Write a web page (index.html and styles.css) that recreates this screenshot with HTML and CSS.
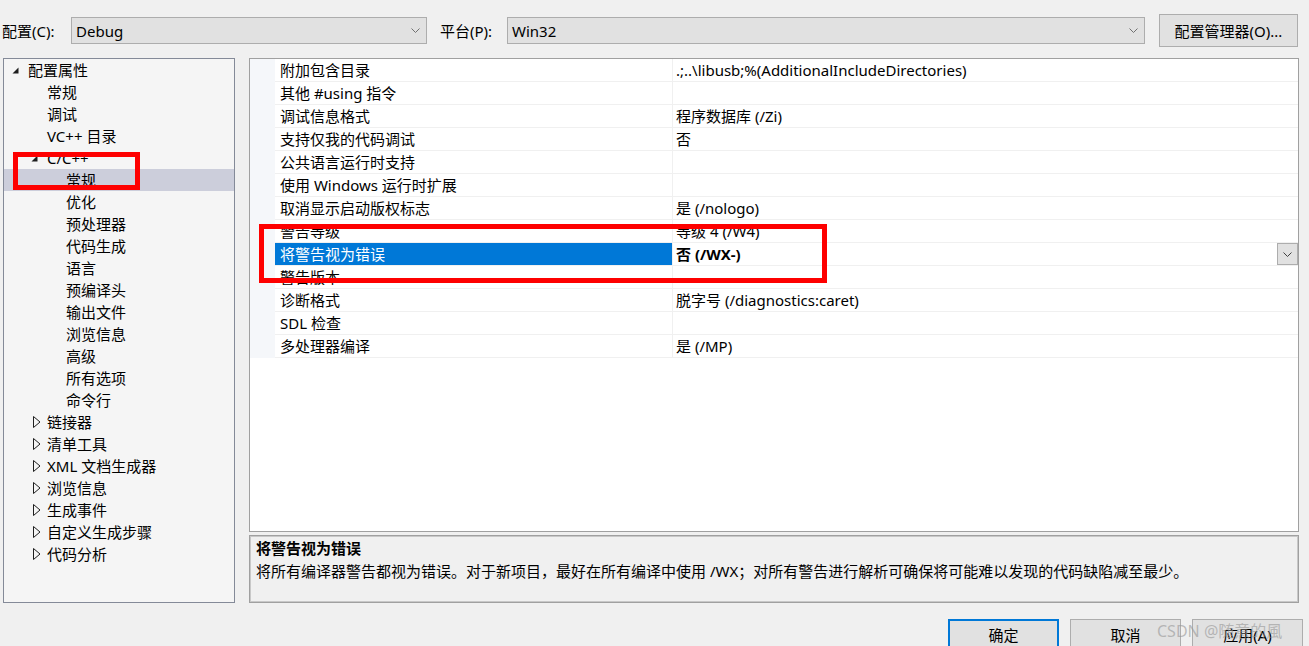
FILE: index.html
```html
<!DOCTYPE html>
<html lang="zh-CN">
<head>
  <meta charset="UTF-8" />
  <title>属性页</title>
  <link rel="stylesheet" href="styles.css">
</head>
<body>
  <div class="toolbar">
    <label class="cfg-label">配置(C):</label>
    <div class="combo combo-cfg">Debug
      <svg width="9" height="5" viewBox="0 0 9 5"><polyline points="0.5,0.5 4.5,4.5 8.5,0.5" fill="none" stroke="#707070"/></svg>
    </div>
    <label class="plat-label">平台(P):</label>
    <div class="combo combo-plat">Win32
      <svg width="9" height="5" viewBox="0 0 9 5"><polyline points="0.5,0.5 4.5,4.5 8.5,0.5" fill="none" stroke="#707070"/></svg>
    </div>
    <button class="btn btn-mgr">配置管理器(O)...</button>
  </div>

  <div class="main">
    <div class="tree">
      <div class="node d0"><span class="twist"><svg width="7" height="7" viewBox="0 0 7 7"><polygon points="6.5,0.5 6.5,6.5 0.5,6.5" fill="#1e1e1e"/></svg></span>配置属性</div>
      <div class="node d1"><span class="twist"></span>常规</div>
      <div class="node d1"><span class="twist"></span>调试</div>
      <div class="node d1"><span class="twist"></span>VC++ 目录</div>
      <div class="node d1"><span class="twist"><svg width="7" height="7" viewBox="0 0 7 7"><polygon points="6.5,0.5 6.5,6.5 0.5,6.5" fill="#1e1e1e"/></svg></span>C/C++</div>
      <div class="node d2 sel"><span class="twist"></span>常规</div>
      <div class="node d2"><span class="twist"></span>优化</div>
      <div class="node d2"><span class="twist"></span>预处理器</div>
      <div class="node d2"><span class="twist"></span>代码生成</div>
      <div class="node d2"><span class="twist"></span>语言</div>
      <div class="node d2"><span class="twist"></span>预编译头</div>
      <div class="node d2"><span class="twist"></span>输出文件</div>
      <div class="node d2"><span class="twist"></span>浏览信息</div>
      <div class="node d2"><span class="twist"></span>高级</div>
      <div class="node d2"><span class="twist"></span>所有选项</div>
      <div class="node d2"><span class="twist"></span>命令行</div>
      <div class="node d1"><span class="twist closed"><svg width="8" height="12" viewBox="0 0 8 12"><polygon points="0.5,0.5 7,6 0.5,11.5" fill="none" stroke="#1e1e1e"/></svg></span>链接器</div>
      <div class="node d1"><span class="twist closed"><svg width="8" height="12" viewBox="0 0 8 12"><polygon points="0.5,0.5 7,6 0.5,11.5" fill="none" stroke="#1e1e1e"/></svg></span>清单工具</div>
      <div class="node d1"><span class="twist closed"><svg width="8" height="12" viewBox="0 0 8 12"><polygon points="0.5,0.5 7,6 0.5,11.5" fill="none" stroke="#1e1e1e"/></svg></span>XML 文档生成器</div>
      <div class="node d1"><span class="twist closed"><svg width="8" height="12" viewBox="0 0 8 12"><polygon points="0.5,0.5 7,6 0.5,11.5" fill="none" stroke="#1e1e1e"/></svg></span>浏览信息</div>
      <div class="node d1"><span class="twist closed"><svg width="8" height="12" viewBox="0 0 8 12"><polygon points="0.5,0.5 7,6 0.5,11.5" fill="none" stroke="#1e1e1e"/></svg></span>生成事件</div>
      <div class="node d1"><span class="twist closed"><svg width="8" height="12" viewBox="0 0 8 12"><polygon points="0.5,0.5 7,6 0.5,11.5" fill="none" stroke="#1e1e1e"/></svg></span>自定义生成步骤</div>
      <div class="node d1"><span class="twist closed"><svg width="8" height="12" viewBox="0 0 8 12"><polygon points="0.5,0.5 7,6 0.5,11.5" fill="none" stroke="#1e1e1e"/></svg></span>代码分析</div>
    </div>

    <div class="right">
      <div class="grid">
        <div class="prop"><span class="gut"></span><span class="name">附加包含目录</span><span class="val">.;..\libusb;%(AdditionalIncludeDirectories)</span></div>
        <div class="prop"><span class="gut"></span><span class="name">其他 #using 指令</span><span class="val"></span></div>
        <div class="prop"><span class="gut"></span><span class="name">调试信息格式</span><span class="val">程序数据库 (/Zi)</span></div>
        <div class="prop"><span class="gut"></span><span class="name">支持仅我的代码调试</span><span class="val">否</span></div>
        <div class="prop"><span class="gut"></span><span class="name">公共语言运行时支持</span><span class="val"></span></div>
        <div class="prop"><span class="gut"></span><span class="name">使用 Windows 运行时扩展</span><span class="val"></span></div>
        <div class="prop"><span class="gut"></span><span class="name">取消显示启动版权标志</span><span class="val">是 (/nologo)</span></div>
        <div class="prop"><span class="gut"></span><span class="name">警告等级</span><span class="val">等级 4 (/W4)</span></div>
        <div class="prop sel"><span class="gut"></span><span class="name">将警告视为错误</span><span class="val"><b>否 (/WX-)</b><span class="dd"><svg width="9" height="5" viewBox="0 0 9 5"><polyline points="0.5,0.5 4.5,4.5 8.5,0.5" fill="none" stroke="#404040"/></svg></span></span></div>
        <div class="prop"><span class="gut"></span><span class="name">警告版本</span><span class="val"></span></div>
        <div class="prop"><span class="gut"></span><span class="name">诊断格式</span><span class="val">脱字号 (/diagnostics:caret)</span></div>
        <div class="prop"><span class="gut"></span><span class="name">SDL 检查</span><span class="val"></span></div>
        <div class="prop"><span class="gut"></span><span class="name">多处理器编译</span><span class="val">是 (/MP)</span></div>
      </div>
      <div class="desc">
        <div class="desc-title">将警告视为错误</div>
        <div>将所有编译器警告都视为错误。对于新项目，最好在所有编译中使用 /WX；对所有警告进行解析可确保将可能难以发现的代码缺陷减至最少。</div>
      </div>
    </div>
  </div>

  <div class="actions">
    <button class="btn btn-act primary">确定</button>
    <button class="btn btn-act">取消</button>
    <button class="btn btn-act">应用(A)</button>
  </div>

  <!-- 标注框 -->
  <div class="mark mark-tree"></div>
  <div class="mark mark-grid"></div>
  <div class="watermark">CSDN @随意的風</div>
</body>
</html>
```

FILE: styles.css
```css
body {
  margin: 0;
  height: 646px;
  overflow: hidden;
  position: relative;
  background: #f0f0f0;
  color: #000;
  font-family: "Noto Sans", "Noto Sans CJK SC", sans-serif;
  font-size: 15px;
}

.toolbar {
  display: flex;
  align-items: center;
  height: 33px;
  padding: 14px 0 0 2px;
  margin-bottom: 11px;
}

.cfg-label {
  width: 69px;
}

.plat-label {
  width: 67px;
  margin-left: 13px;
}

.combo {
  height: 27px;
  box-sizing: border-box;
  border: 1px solid #adadad;
  background: #e1e1e1;
  display: flex;
  align-items: center;
  justify-content: space-between;
  padding: 0 6px 0 4px;
}

.combo-cfg {
  width: 356px;
}

.combo-plat {
  width: 638px;
}

.btn {
  font-family: inherit;
  font-size: 15px;
  color: #000;
  background: #e1e1e1;
  border: 1px solid #adadad;
  padding: 0;
  margin: 0;
}

.btn-mgr {
  width: 139px;
  height: 33px;
  margin-left: 14px;
}

.main {
  display: flex;
  gap: 14px;
  margin-left: 3px;
  height: 545px;
}

.tree {
  width: 232px;
  box-sizing: border-box;
  border: 1px solid #848a98;
  background: #f5f5f5;
}

.node {
  display: flex;
  align-items: center;
  height: 22px;
  line-height: 22px;
  white-space: nowrap;
}

.node.d0 { padding-left: 5px; }
.node.d1 { padding-left: 24px; }
.node.d2 { padding-left: 43px; }

.node.sel {
  background: #cccedb;
}

.twist {
  width: 19px;
  height: 22px;
  display: flex;
  align-items: center;
  padding-left: 3px;
  box-sizing: border-box;
}

.twist.closed {
  padding-left: 5px;
}

.right {
  width: 1050px;
  display: flex;
  flex-direction: column;
  gap: 3px;
}

.grid {
  height: 474px;
  flex: none;
  box-sizing: border-box;
  border: 1px solid #a0a0a0;
  background: #fff;
}

.prop {
  display: grid;
  grid-template-columns: 25px 397px 1fr;
  height: 23px;
  line-height: 22px;
}

.prop .gut {
  background: #f5f7fa;
}

.prop .name {
  padding-left: 5px;
  border-bottom: 1px solid #f0f0f0;
  white-space: nowrap;
}

.prop .val {
  display: flex;
  justify-content: space-between;
  padding-left: 3px;
  border-left: 1px solid #f0f0f0;
  border-bottom: 1px solid #f0f0f0;
  white-space: nowrap;
}

.prop.sel .name {
  background: #0078d7;
  color: #fff;
}

.dd {
  width: 21px;
  height: 22px;
  box-sizing: border-box;
  border: 1px solid #adadad;
  background: #e1e1e1;
  display: flex;
  align-items: center;
  justify-content: center;
}

.desc {
  flex: 1;
  box-sizing: border-box;
  border: 1px solid #a0a0a0;
  box-shadow: inset 0 0 0 1px #c8c8c8;
  padding: 1px 6px;
  line-height: 23px;
  white-space: nowrap;
}

.desc-title {
  font-weight: bold;
}

.actions {
  display: flex;
  justify-content: flex-end;
  gap: 11px;
  padding-right: 6px;
  margin-top: 16px;
}

.btn-act {
  width: 111px;
  height: 30px;
}

.btn-act.primary {
  border: 2px solid #0078d7;
}

.mark {
  position: absolute;
  box-sizing: border-box;
  border: 5px solid #fe0000;
}

.mark-tree {
  left: 13px;
  top: 152px;
  width: 127px;
  height: 38px;
}

.mark-grid {
  left: 259px;
  top: 224px;
  width: 568px;
  height: 59px;
}

.watermark {
  position: absolute;
  left: 1157px;
  top: 618px;
  font-size: 16px;
  color: rgba(150, 150, 150, 0.6);
  white-space: nowrap;
}
```
